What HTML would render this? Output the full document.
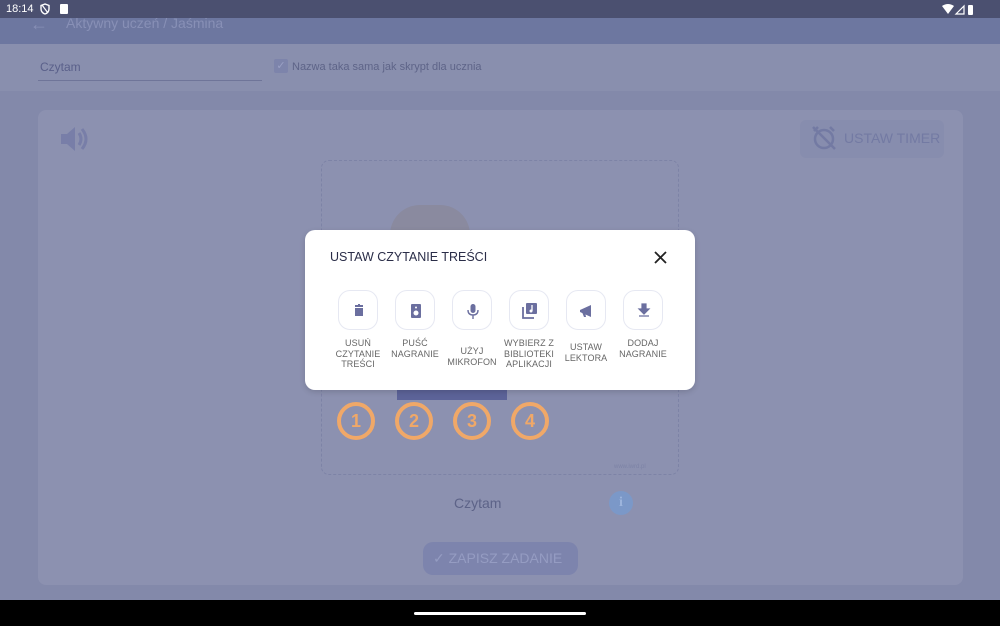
<!DOCTYPE html>
<html><head><meta charset="utf-8"><style>
*{margin:0;padding:0;box-sizing:border-box}
body{width:1000px;height:626px;overflow:hidden;position:relative;background:#8389aa;font-family:"Liberation Sans",sans-serif}
.abs{position:absolute}
.lbl{position:absolute;top:338px;width:70px;text-align:center;font-size:9px;line-height:10.5px;color:#666;letter-spacing:0.1px}
.btn{position:absolute;top:290px;width:40px;height:40px;border:1px solid #e6e8f2;border-radius:12px;background:#fff}
.btn svg{position:absolute;left:10px;top:10px}
.num{position:absolute;top:402px;width:38px;height:38px;border:4px solid #f0a868;border-radius:50%;color:#f0a868;font-weight:bold;font-size:18px;text-align:center;line-height:30px}
</style></head><body>
<div class="abs" style="left:0;top:0;width:1000px;height:18px;background:#4b5070"></div>
<div class="abs" style="left:6px;top:3px;color:#fff;font-size:11px">18:14</div>
<svg class="abs" style="left:40px;top:3px" width="10" height="12"><path d="M5 1L1 2.5V6c0 2.5 2 4.5 4 5 2-.5 4-2.5 4-5V2.5z" fill="none" stroke="#fff" stroke-width="1.4"/><path d="M2 2l6 8" stroke="#fff" stroke-width="1.2"/></svg>
<div class="abs" style="left:60px;top:4px;width:8px;height:10px;background:#fff;border-radius:1px"></div>
<svg class="abs" style="left:942px;top:4px" width="40" height="11"><path d="M0 2Q6-2 12 2L6 10z" fill="#fff"/><path d="M14 10L22 2V10z" fill="none" stroke="#fff" stroke-width="1.2"/><rect x="26" y="1" width="5" height="10" rx="1" fill="#fff"/></svg>
<div class="abs" style="left:0;top:18px;width:1000px;height:26px;background:#6d77a0"></div>
<div class="abs" style="left:30px;top:14px;color:#8890b6;font-size:18px">←</div>
<div class="abs" style="left:66px;top:15px;color:#8890b6;font-size:14px">Aktywny uczeń / Jaśmina</div>
<div class="abs" style="left:0;top:44px;width:1000px;height:47px;background:#898fae"></div>
<div class="abs" style="left:40px;top:60px;color:#5a608a;font-size:12px">Czytam</div>
<div class="abs" style="left:38px;top:80px;width:224px;height:1px;background:#6f7599"></div>
<div class="abs" style="left:274px;top:59px;width:14px;height:14px;background:#7d84ab;border-radius:2px;color:#9aa0c4;font-size:11px;line-height:14px;text-align:center">✓</div>
<div class="abs" style="left:292px;top:61px;color:#5e6488;font-size:11px">Nazwa taka sama jak skrypt dla ucznia</div>
<div class="abs" style="left:38px;top:110px;width:925px;height:475px;background:#8c91b0;border-radius:8px"></div>
<svg class="abs" style="left:60px;top:124px" width="32" height="30"><path d="M1 10h6l8-7v24l-8-7H1z" fill="#787ea8"/><path d="M19 9q4 6 0 12M22 5q8 10 0 20" stroke="#787ea8" stroke-width="3" fill="none"/></svg>
<div class="abs" style="left:800px;top:120px;width:144px;height:38px;background:#878dae;border-radius:6px"></div>
<svg class="abs" style="left:810px;top:124px" width="28" height="28"><circle cx="14" cy="15" r="9" fill="none" stroke="#737aa3" stroke-width="2.5"/><path d="M3 3l22 22M4 7l4-4M24 7l-4-4" stroke="#737aa3" stroke-width="2.5"/></svg>
<div class="abs" style="left:844px;top:130px;color:#737aa3;font-size:14px">USTAW TIMER</div>
<div class="abs" style="left:321px;top:160px;width:358px;height:315px;border:1px dashed #7d83a6;border-radius:8px"></div>
<div class="abs" style="left:390px;top:205px;width:80px;height:30px;background:#8a8a9f;border-radius:30px 30px 0 0"></div>
<div class="abs" style="left:397px;top:388px;width:110px;height:12px;background:#5c6398"></div>
<div class="num" style="left:337px">1</div>
<div class="num" style="left:395px">2</div>
<div class="num" style="left:453px">3</div>
<div class="num" style="left:511px">4</div>
<div class="abs" style="left:614px;top:464px;color:#7d83a6;font-size:6px">www.iwrd.pl</div>
<div class="abs" style="left:454px;top:495px;color:#5d6388;font-size:14px">Czytam</div>
<div class="abs" style="left:609px;top:491px;width:24px;height:24px;border-radius:50%;background:#7b98c8;color:#9cb4dc;text-align:center;font-size:14px;line-height:24px;font-family:'Liberation Serif',serif;font-weight:bold">i</div>
<div class="abs" style="left:423px;top:542px;width:155px;height:33px;background:#7d84ad;border-radius:10px"></div>
<div class="abs" style="left:433px;top:550px;color:#959cc2;font-size:14px">✓ ZAPISZ ZADANIE</div>
<div class="abs" style="left:0;top:600px;width:1000px;height:26px;background:#000"></div>
<div class="abs" style="left:414px;top:612px;width:172px;height:3px;background:#fff;border-radius:2px"></div>
<div class="abs" style="left:305px;top:230px;width:390px;height:160px;background:#fff;border-radius:10px;box-shadow:0 2px 6px rgba(0,0,0,.15)"></div>
<div class="abs" style="left:330px;top:250px;color:#2a2d48;font-size:12.5px">USTAW CZYTANIE TREŚCI</div>
<svg class="abs" style="left:654px;top:251px" width="13" height="13"><path d="M1 1l11 11M12 1L1 12" stroke="#222" stroke-width="1.8"/></svg>
<div class="btn" style="left:338px"><svg width="20" height="20"><path d="M6 5h8M9 4h2" stroke="#6b6f9f" stroke-width="2"/><path d="M6 7h8v8H6z" fill="#6b6f9f"/></svg></div>
<div class="btn" style="left:395px"><svg width="20" height="20"><rect x="5" y="3" width="10" height="14" rx="1" fill="#6b6f9f"/><circle cx="10" cy="12" r="2.5" fill="#fff"/><circle cx="10" cy="6.5" r="1" fill="#fff"/></svg></div>
<div class="btn" style="left:452px"><svg width="20" height="20"><rect x="7.5" y="3" width="5" height="9" rx="2.5" fill="#6b6f9f"/><path d="M5 9q0 5 5 5t5-5M10 14v4" stroke="#6b6f9f" stroke-width="1.4" fill="none"/></svg></div>
<div class="btn" style="left:509px"><svg width="20" height="20"><path d="M3 6v11h11" stroke="#6b6f9f" stroke-width="1.8" fill="none"/><rect x="6" y="2" width="11" height="11" rx="1" fill="#6b6f9f"/><path d="M12 4v6" stroke="#fff" stroke-width="1.3"/><circle cx="11" cy="10" r="1.5" fill="#fff"/></svg></div>
<div class="btn" style="left:566px"><svg width="20" height="20"><path d="M3 9l11-5v12L3 11z" fill="#6b6f9f"/><path d="M5 11l2 5h2l-1-5" fill="#6b6f9f"/></svg></div>
<div class="btn" style="left:623px"><svg width="20" height="20"><path d="M8 3h4v5h3l-5 5-5-5h3zM5 15h10" fill="#6b6f9f" stroke="#6b6f9f" stroke-width="1.2"/></svg></div>
<div class="lbl" style="left:323px">USUŃ<br>CZYTANIE<br>TREŚCI</div>
<div class="lbl" style="left:380px">PUŚĆ<br>NAGRANIE</div>
<div class="lbl" style="left:437px;top:346px">UŻYJ<br>MIKROFON</div>
<div class="lbl" style="left:494px">WYBIERZ Z<br>BIBLIOTEKI<br>APLIKACJI</div>
<div class="lbl" style="left:551px;top:342px">USTAW<br>LEKTORA</div>
<div class="lbl" style="left:608px">DODAJ<br>NAGRANIE</div>
</body></html>
